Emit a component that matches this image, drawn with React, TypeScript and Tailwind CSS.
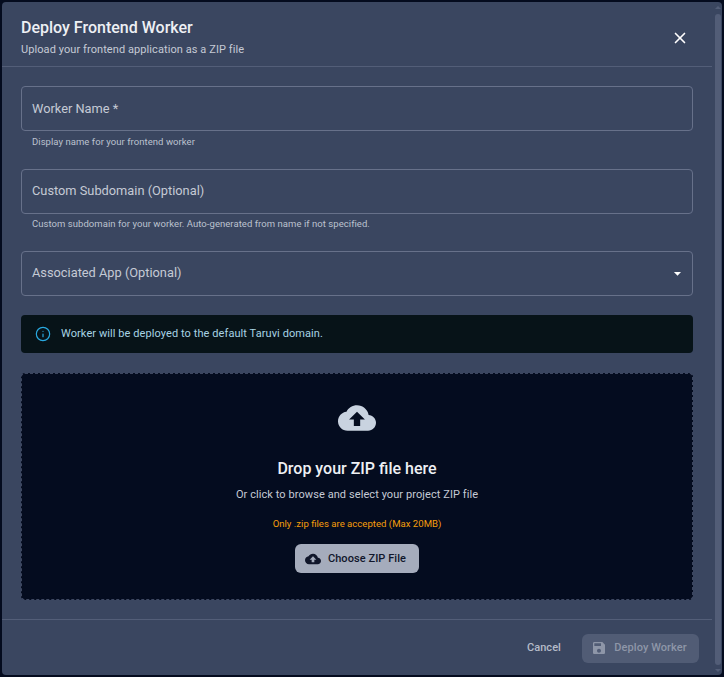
import { Info, X } from 'lucide-react';

function CloudUpload({ className }: { className: string }) {
  return (
    <svg viewBox="0 0 24 24" fill="currentColor" className={className}>
      <path d="M19.35 10.04C18.67 6.59 15.64 4 12 4 9.11 4 6.6 5.64 5.35 8.04 2.34 8.36 0 10.91 0 14c0 3.31 2.69 6 6 6h13c2.76 0 5-2.24 5-5 0-2.64-2.05-4.78-4.65-4.96zM14 13v4h-4v-4H7l5-5 5 5h-3z" />
    </svg>
  );
}

function SaveIcon({ className }: { className: string }) {
  return (
    <svg viewBox="0 0 24 24" fill="currentColor" className={className}>
      <path d="M17 3H5c-1.11 0-2 .9-2 2v14c0 1.1.89 2 2 2h14c1.1 0 2-.9 2-2V7l-4-4zm-5 16c-1.66 0-3-1.34-3-3s1.34-3 3-3 3 1.34 3 3-1.34 3-3 3zm3-10H5V5h10v4z" />
    </svg>
  );
}

function Field({ label, helper, select, raised }: { label: string; helper?: string; select?: boolean; raised?: boolean }) {
  return (
    <div>
      <div className="h-[45px] rounded border border-[#67718a] flex items-center justify-between pl-[10px] pr-[6px]">
        <span className={raised ? 'text-[12.8px] text-[#c5cad5] mb-[1px]' : 'text-[12.8px] text-[#c5cad5]'}>{label}</span>
        {select && (
          <svg viewBox="0 0 24 24" fill="currentColor" className="w-[17px] h-[17px] text-white">
            <path d="M7 10l5 5 5-5z" />
          </svg>
        )}
      </div>
      {helper && (
        <p className={raised ? 'text-[9.5px] leading-[14px] tracking-[0.05px] text-[#bcc2cf] mt-[3px] mb-[1px] ml-[11px]' : 'text-[9.5px] leading-[14px] tracking-[0.05px] text-[#bcc2cf] mt-[4px] ml-[11px]'}>
          {helper}
        </p>
      )}
    </div>
  );
}

export default function App() {
  return (
    <div className="w-[724px] h-[677px] bg-[#040b1e] p-[2px] font-['Roboto',sans-serif] overflow-hidden">
      <div className="w-[720px] h-[673px] bg-[#3a4660] rounded flex overflow-hidden">
        <div className="w-[710px] flex flex-col">
          {/* Header */}
          <div className="h-[64px] border-b border-[#535e78] box-content flex justify-between pl-[19px] pr-[23px]">
            <div>
              <h2 className="mt-[15px] text-[16px] leading-[22px] font-medium text-[#eef0f4]">Deploy Frontend Worker</h2>
              <p className="mt-[3px] text-[11px] leading-[16px] tracking-[0.08px] text-[#c5cad5]">Upload your frontend application as a ZIP file</p>
            </div>
            <X size={18} strokeWidth={2.2} className="text-white mt-[27px]" />
          </div>

          {/* Form */}
          <div className="flex-1 px-[19px] pt-[19px] flex flex-col">
            <Field label="Worker Name *" helper="Display name for your frontend worker" />
            <div className="mt-[20px]">
              <Field raised label="Custom Subdomain (Optional)" helper="Custom subdomain for your worker. Auto-generated from name if not specified." />
            </div>
            <div className="mt-[19px]">
              <Field raised label="Associated App (Optional)" select />
            </div>

            <div className="mt-[19px] h-[38px] rounded bg-[#071318] flex items-center pl-[14px] text-[#a8d3e4]">
              <Info size={16} strokeWidth={1.8} className="text-[#29a9e0]" />
              <span className="ml-[10px] text-[11px] tracking-[0.08px]">Worker will be deployed to the default Taruvi domain.</span>
            </div>

            <div className="mt-[20px] h-[227px] rounded bg-[#040c1f] border border-dashed border-[#3d4760] flex flex-col items-center">
              <CloudUpload className="w-[38px] h-[38px] mt-[25px] text-[#c9d3e0]" />
              <h3 className="mt-[21px] text-[16px] leading-[22px] font-medium text-[#eef0f4]">Drop your ZIP file here</h3>
              <p className="mt-[7px] text-[11px] leading-[16px] tracking-[0.08px] text-[#c5cad5]">Or click to browse and select your project ZIP file</p>
              <p className="mt-[14px] text-[9.6px] leading-[14px] text-[#f59e0b]">Only .zip files are accepted (Max 20MB)</p>
              <div className="mt-[13px] h-[29px] w-[124px] rounded-md bg-[#a5acbc] flex items-center justify-center gap-[7px] pr-[3px] text-[#10162a]">
                <CloudUpload className="w-[16px] h-[16px]" />
                <span className="text-[11px] font-medium tracking-[0.07px] mt-[1px]">Choose ZIP File</span>
              </div>
            </div>
          </div>

          {/* Footer */}
          <div className="h-[56px] border-t border-[#535e78] flex items-center justify-end pr-[13px] pt-[1px]">
            <span className="text-[11px] font-medium tracking-[0.07px] text-[#b5bbc8]">Cancel</span>
            <div className="ml-[21px] h-[29px] w-[117px] rounded-md bg-[#515c75] flex items-center justify-center gap-[7px] pr-[3px] text-[#8e96a8]">
              <SaveIcon className="w-[16px] h-[16px]" />
              <span className="text-[11px] font-medium tracking-[0.07px]">Deploy Worker</span>
            </div>
          </div>
        </div>

        {/* Scrollbar */}
        <div className="w-[10px] flex justify-start">
          <div className="w-[7px] ml-[2px] flex flex-col items-center pt-[4px] pb-[3px]">
            <div className="w-0 h-0 border-x-[3px] border-x-transparent border-b-[3px] border-b-[#535e78]" />
            <div className="mt-[5px] flex-1 w-[6px] rounded-sm bg-[#525d77]" />
            <div className="mt-[4px] w-0 h-0 border-x-[3px] border-x-transparent border-t-[3px] border-t-[#535e78]" />
          </div>
        </div>
      </div>
    </div>
  );
}
